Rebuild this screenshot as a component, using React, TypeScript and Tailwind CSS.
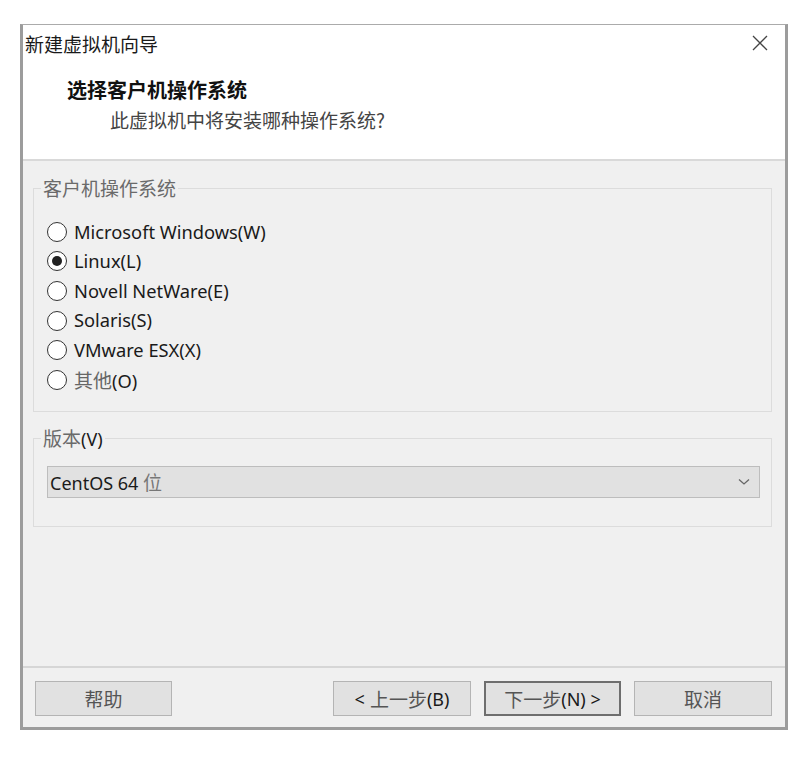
import { FC, ReactNode } from 'react'

const zh = "font-['Noto_Sans_CJK_SC',sans-serif] text-[19px]"

const Zh: FC<{ children: ReactNode; className?: string }> = ({ children, className = '' }) => (
  <span className={`${zh} ${className}`}>{children}</span>
)

interface RadioProps {
  label: ReactNode
  checked?: boolean
}

const Radio: FC<RadioProps> = ({ label, checked }) => (
  <div className="flex h-[29.6px] items-center gap-[7px]">
    <div className="flex h-[20px] w-[20px] items-center justify-center rounded-full border border-[#333] bg-white">
      {checked && <div className="h-[10px] w-[10px] rounded-full bg-[#222]" />}
    </div>
    <span className="text-[18.3px] text-[#1a1a1a]">{label}</span>
  </div>
)

const Button: FC<{ children: ReactNode; primary?: boolean; className?: string }> = ({
  children,
  primary,
  className = '',
}) => (
  <div
    className={`flex h-[35px] items-center justify-center bg-[#e1e1e1] text-[18px] text-[#1a1a1a] ${
      primary ? 'border-2 border-[#6e6e6e]' : 'border border-[#b4b4b4]'
    } ${className}`}
  >
    {children}
  </div>
)

const systems = [
  { label: 'Microsoft Windows(W)' },
  { label: 'Linux(L)', checked: true },
  { label: 'Novell NetWare(E)' },
  { label: 'Solaris(S)' },
  { label: 'VMware ESX(X)' },
  {
    label: (
      <>
        <Zh className="text-[#666]">其他</Zh>(O)
      </>
    ),
  },
]

export default function App() {
  return (
    <div className="h-[762px] w-[802px] bg-white pl-[20px] pt-[24px] font-['Noto_Sans','Noto_Sans_CJK_SC',sans-serif] leading-none">
      <div className="flex h-[706px] w-[768px] flex-col border-x-[3px] border-b-[3px] border-t border-[#9c9c9c] border-t-[#ababab]">
        {/* header */}
        <div className="h-[136px] border-b-2 border-[#d9d9d9] bg-white">
          <div className="flex items-start justify-between pl-[2px] pr-[17px] pt-[6px]">
            <span className={`${zh} text-[19.6px] leading-[26px] text-[#1a1a1a]`}>新建虚拟机向导</span>
            <svg width="16" height="16" viewBox="0 0 16 16" className="mt-[4px]">
              <path d="M1 1L15 15M15 1L1 15" stroke="#444" strokeWidth="1.3" />
            </svg>
          </div>
          <div className={`${zh} ml-[44px] mt-[20px] text-[20px] font-bold leading-[26px] text-[#111]`}>
            选择客户机操作系统
          </div>
          <div className={`${zh} ml-[87px] mt-[4px] leading-[26px] text-[#444]`}>此虚拟机中将安装哪种操作系统?</div>
        </div>

        {/* body */}
        <div className="flex flex-1 flex-col bg-[#f0f0f0] pl-[10px] pr-[13px] pt-[15px]">
          <fieldset className="border border-[#dcdcdc] pb-[16px]">
            <legend className={`${zh} ml-[7px] px-[2px] leading-[24px] text-[#6a6a6a]`}>客户机操作系统</legend>
            <div className="mt-[17px] flex flex-col pl-[13px]">
              {systems.map((s, i) => (
                <Radio key={i} label={s.label} checked={s.checked} />
              ))}
            </div>
          </fieldset>

          <fieldset className="mt-[14px] border border-[#dcdcdc] pb-[28px]">
            <legend className="ml-[7px] px-[2px] text-[18px] leading-[24px] text-[#1a1a1a]">
              <Zh className="text-[#6a6a6a]">版本</Zh>(V)
            </legend>
            <div className="ml-[13px] mr-[11px] mt-[15px] flex h-[32px] items-center justify-between border border-[#bdbdbd] bg-[#e1e1e1] pl-[2px] pr-[9px]">
              <span className="text-[18px] text-[#1a1a1a]">
                CentOS 64 <Zh className="text-[#777]">位</Zh>
              </span>
              <svg width="12" height="8" viewBox="0 0 12 8">
                <path d="M1 1.5L6 6L11 1.5" stroke="#666" strokeWidth="1.3" fill="none" />
              </svg>
            </div>
          </fieldset>
        </div>

        {/* footer */}
        <div className="flex h-[61px] items-start border-t-2 border-[#d6d6d6] bg-[#f0f0f0] pl-[12px] pr-[13px] pt-[13px]">
          <Button className="w-[137px]">
            <Zh className="text-[#555]">帮助</Zh>
          </Button>
          <div className="flex-1" />
          <Button className="w-[138px]">
            &lt; <Zh className="ml-[5px] text-[#555]">上一步</Zh>(B)
          </Button>
          <Button primary className="ml-[13px] w-[137px]">
            <Zh className="text-[#555]">下一步</Zh>(N) &gt;
          </Button>
          <Button className="ml-[13px] w-[138px]">
            <Zh className="text-[#555]">取消</Zh>
          </Button>
        </div>
      </div>
    </div>
  )
}
